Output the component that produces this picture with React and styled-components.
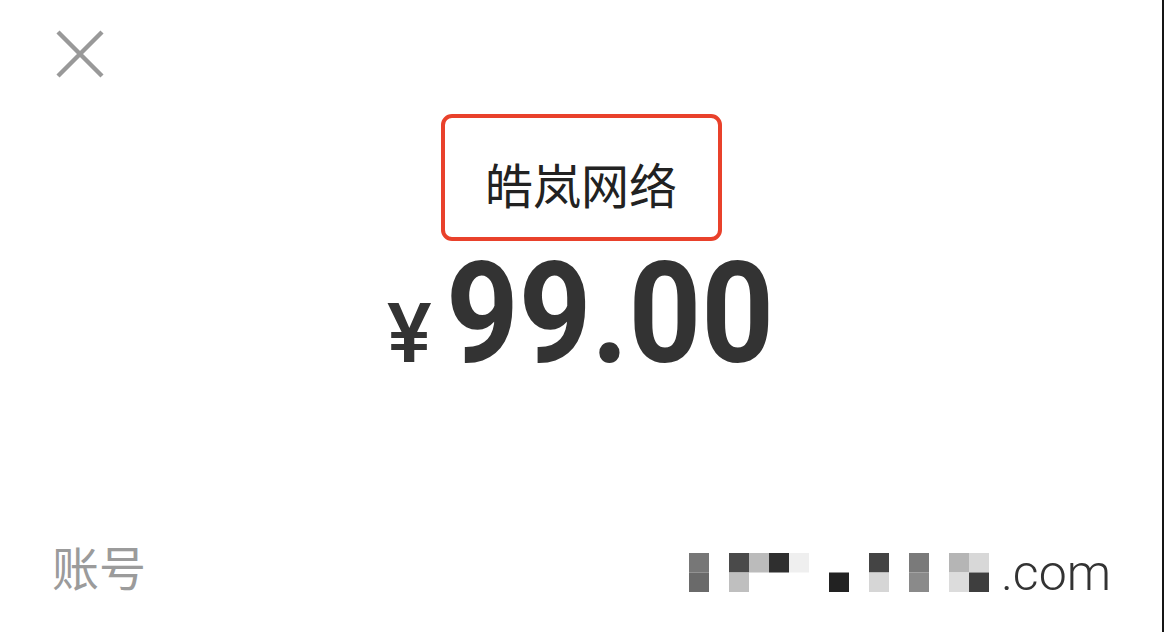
import React from "react";
import styled, { createGlobalStyle } from "styled-components";

const GlobalStyle = createGlobalStyle`
  html, body {
    margin: 0;
    padding: 0;
    background: #fff;
  }
  body {
    font-family: Roboto, "Noto Sans CJK SC", sans-serif;
  }
`;

const mosaic = [
  ["#777777", "#6a6a6a"],
  [null, null],
  ["#4a4a4a", "#bfbfbf"],
  ["#bbbbbb", null],
  ["#2f2f2f", null],
  ["#efefef", null],
  [null, null],
  [null, "#222222"],
  [null, null],
  ["#444444", "#d6d6d6"],
  [null, null],
  ["#7a7a7a", "#8a8a8a"],
  [null, null],
  ["#b5b5b5", "#dcdcdc"],
  ["#d8d8d8", "#3e3e3e"]
];

class App extends React.Component {
  render() {
    return (
      <>
        <GlobalStyle />
        <Page>
          <Header>
            <CloseButton aria-label="关闭">
              <svg width="50" height="50" viewBox="0 0 50 50">
                <path
                  d="M3 3 L47 47 M47 3 L3 47"
                  stroke="#999"
                  strokeWidth="4.4"
                  fill="none"
                />
              </svg>
            </CloseButton>
          </Header>
          <Center>
            <MerchantBox>皓岚网络</MerchantBox>
            <Price>
              <Currency>¥</Currency>
              <Amount>99.00</Amount>
            </Price>
          </Center>
          <Footer>
            <Label>账号</Label>
            <Account>
              <svg width="300" height="39" viewBox="0 0 300 39">
                {mosaic.map((col, i) =>
                  col.map((c, j) =>
                    c ? (
                      <rect
                        key={i + "-" + j}
                        x={i * 20}
                        y={j * 19.5}
                        width="20"
                        height="19.5"
                        fill={c}
                      />
                    ) : null
                  )
                )}
              </svg>
              <Domain>.com</Domain>
            </Account>
          </Footer>
        </Page>
      </>
    );
  }
}

const Page = styled.div`
  width: 1164px;
  height: 632px;
  box-sizing: border-box;
  border-right: 2px solid #151515;
  background: #fff;
  display: flex;
  flex-direction: column;
  overflow: hidden;
`;
const Header = styled.div`
  height: 114px;
  padding: 29px 0 0 55px;
  box-sizing: border-box;
`;
const CloseButton = styled.button`
  width: 50px;
  height: 50px;
  padding: 0;
  border: none;
  background: none;
  display: block;
  cursor: pointer;
`;
const Center = styled.div`
  display: flex;
  flex-direction: column;
  align-items: center;
`;
const MerchantBox = styled.div`
  width: 281px;
  height: 127px;
  box-sizing: border-box;
  border: 4px solid #e9412b;
  border-radius: 11px;
  display: flex;
  align-items: center;
  justify-content: center;
  padding-top: 10px;
  font-family: "Noto Sans CJK SC", sans-serif;
  font-size: 48px;
  color: #222;
`;
const Price = styled.div`
  display: flex;
  align-items: baseline;
  margin-top: 2px;
  color: #333;
  line-height: 1;
  padding-left: 2px;
`;
const Currency = styled.span`
  font-family: Roboto, sans-serif;
  font-weight: 500;
  font-size: 84px;
  margin-right: 14px;
`;
const Amount = styled.span`
  font-family: Roboto, sans-serif;
  font-weight: 700;
  font-size: 141px;
  letter-spacing: 0;
  display: inline-block;
  transform: scaleX(0.9);
  transform-origin: left center;
  margin-right: -33px;
`;
const Footer = styled.div`
  margin-top: auto;
  display: flex;
  justify-content: space-between;
  align-items: flex-end;
  padding: 0 51px 43px 52px;
`;
const Label = styled.div`
  font-family: "Noto Sans CJK SC", sans-serif;
  font-size: 47px;
  color: #9b9b9b;
  line-height: 1;
`;
const Account = styled.div`
  display: flex;
  align-items: flex-end;
  gap: 12px;
  margin-bottom: -3px;
`;
const Domain = styled.span`
  font-family: Roboto, sans-serif;
  font-weight: 300;
  font-size: 50px;
  color: #333;
  line-height: 1;
  margin-bottom: -6px;
`;

export default App;
